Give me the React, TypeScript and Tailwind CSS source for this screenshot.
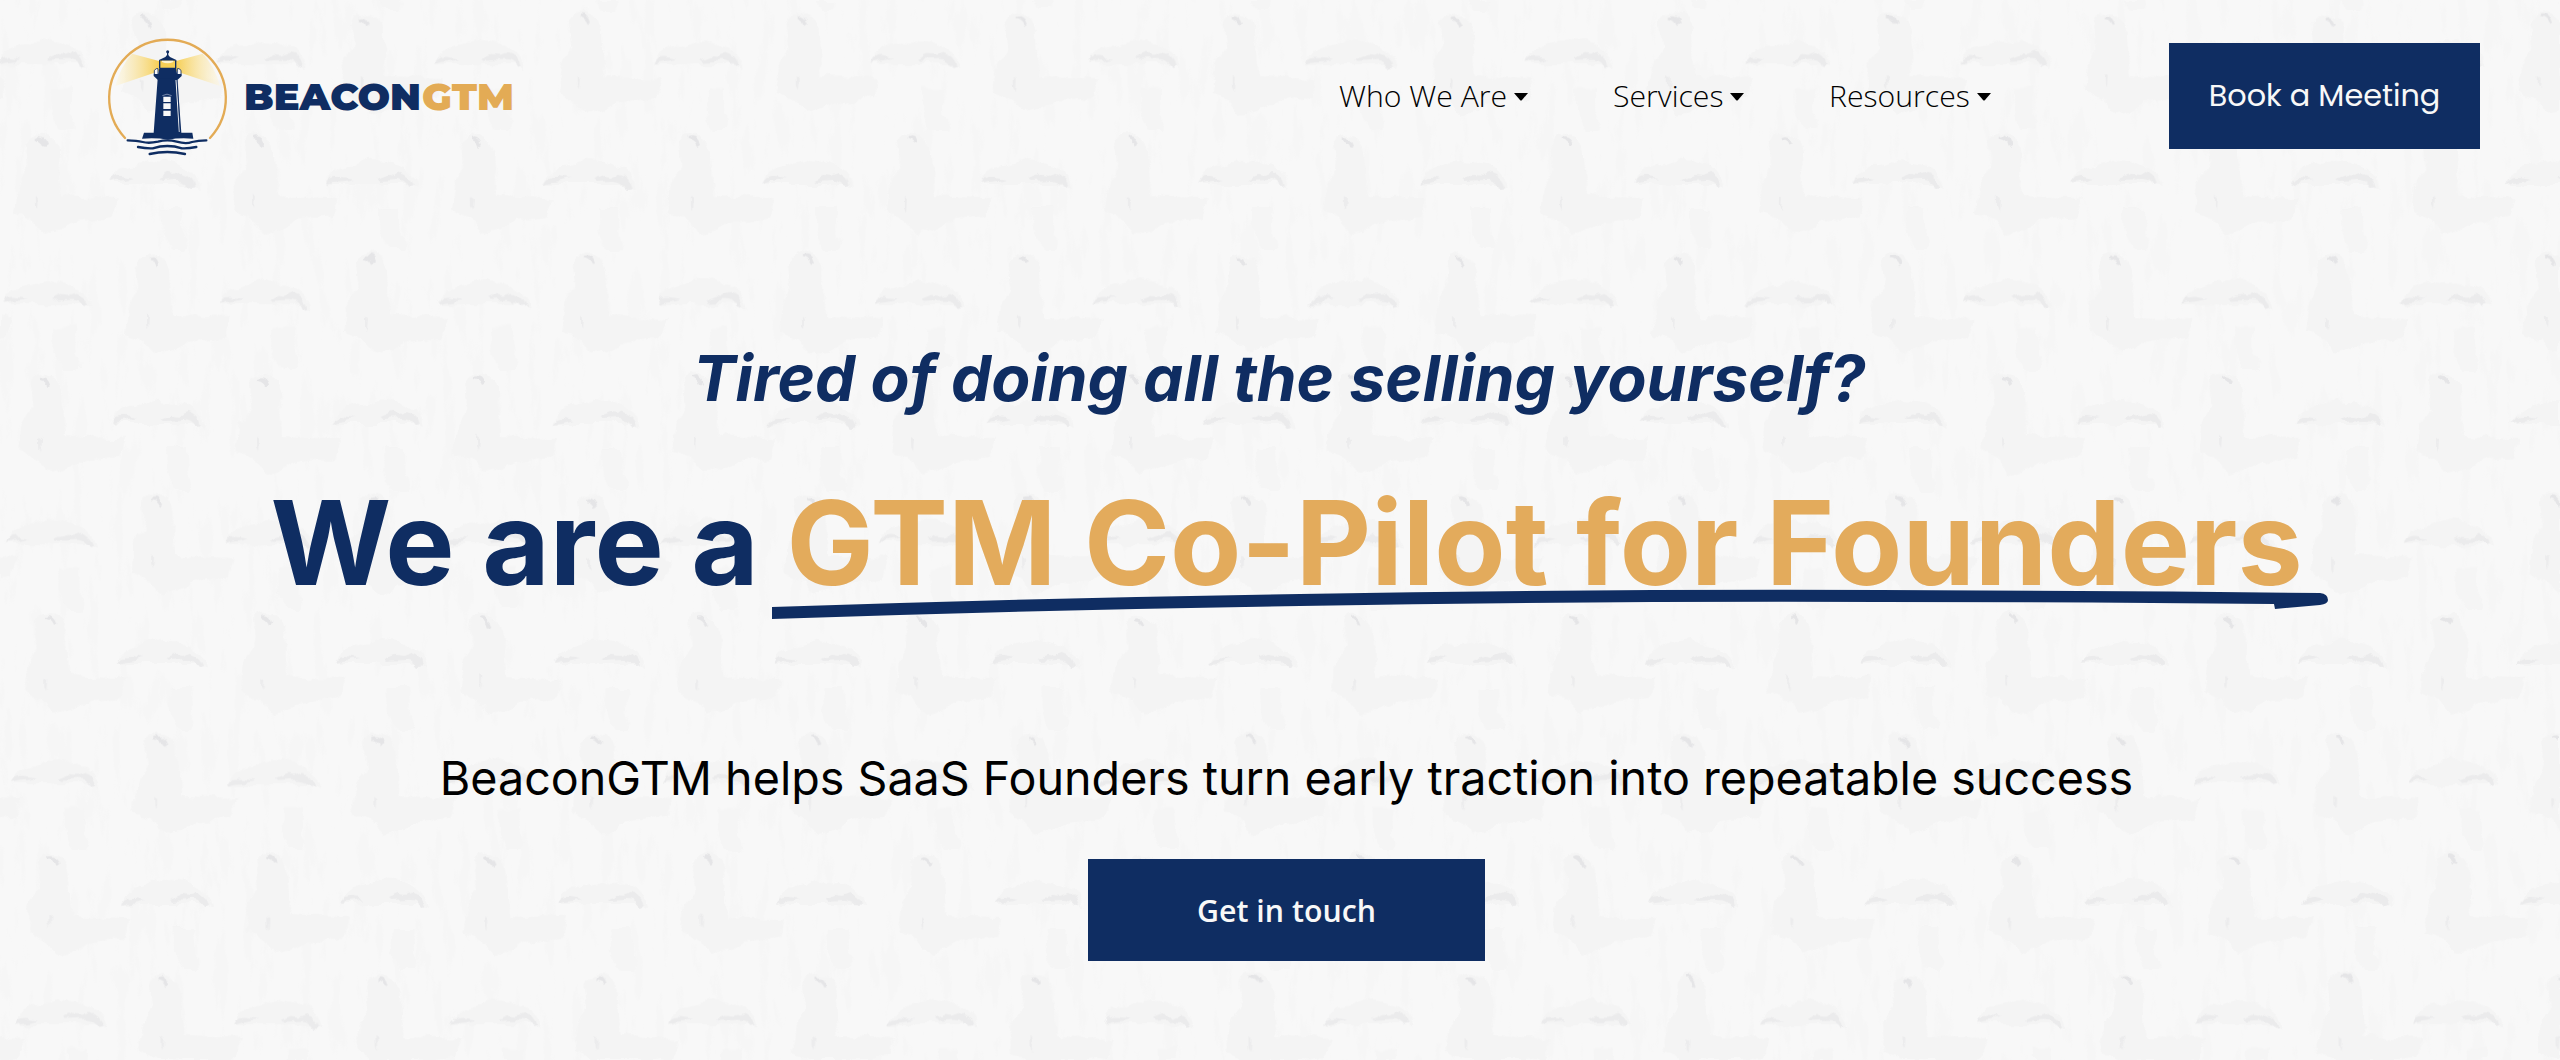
const NAVY = "#0f2d62";

const navItems = [
  { label: "Who We Are", width: "w-[189px]" },
  { label: "Services", width: "w-[131px]" },
  { label: "Resources", width: "w-[162px]" },
];

function WovenBackground() {
  return (
    <svg className="absolute inset-0 h-full w-full" aria-hidden="true">
      <defs>
        <filter id="rough" x="0" y="0" width="100%" height="100%">
          <feTurbulence type="fractalNoise" baseFrequency="0.05 0.03" numOctaves={4} seed={7} result="n" />
          <feDisplacementMap in="SourceGraphic" in2="n" scale={12} xChannelSelector="R" yChannelSelector="G" />
        </filter>
        {/* faint vertical fibres between the threads */}
        <filter id="fibres" x="0" y="0" width="100%" height="100%" colorInterpolationFilters="sRGB">
          <feTurbulence type="fractalNoise" baseFrequency="0.07 0.018" numOctaves={4} seed={3} />
          <feColorMatrix values="0 0 0 0 0.955  0 0 0 0 0.955  0 0 0 0 0.955  9 0 0 0 -5" />
        </filter>
        <g id="thread">
          <path d="M2 28 Q6 15 30 12 L44 8 Q60 8 72 14 Q88 20 90 36 L82 32 L2 32Z" fill="#f4f4f4" />
          <path d="M52 56 h20 v26 q8 8 2 16 h-14 q-6 -8 -8 -20z" fill="#f5f5f5" />
          <path d="M26 110 Q30 100 42 102 Q56 104 58 120 L60 164 L118 166 L112 186 L76 190 L60 198 L44 202 L32 188 L14 180 L18 150 L28 136Z" fill="#f4f4f4" />
          <path d="M0 32 q2 -8 12 -7 l12 2 -8 2 -10 1z M48 27 l10 -4 8 1 8 -3 q10 3 12 13 l-4 1 q-5 -8 -14 -7 l-18 1z" fill="#ebebec" />
          <path d="M36 105 q8 -3 11 7 l-3 2 q-2 -6 -8 -7z" fill="#e5e5e7" />
          <path d="M34 164 l3 2 -1 12 -2 -4z" fill="#ececed" />
        </g>
        <pattern id="weave" width="218" height="240" patternUnits="userSpaceOnUse" patternTransform="translate(109 152) skewX(1)">
          <use href="#thread" />
          <use href="#thread" x="-109" y="120" />
          <use href="#thread" x="109" y="120" />
          <use href="#thread" x="-109" y="-120" />
          <use href="#thread" x="109" y="-120" />
        </pattern>
      </defs>
      <rect width="100%" height="100%" filter="url(#fibres)" opacity="0.4" />
      <rect width="100%" height="100%" fill="url(#weave)" filter="url(#rough)" />
    </svg>
  );
}

function Lighthouse() {
  return (
    <svg className="h-[150px] w-[160px] shrink-0" viewBox="0 0 480 450">
      <defs>
        <linearGradient id="beamL" x1="1" x2="0" y1="0" y2="0">
          <stop offset="0" stopColor="#f6cf55" />
          <stop offset="1" stopColor="#fdf6e0" stopOpacity="0.5" />
        </linearGradient>
        <linearGradient id="beamR" x1="0" x2="1" y1="0" y2="0">
          <stop offset="0" stopColor="#f6cf55" />
          <stop offset="1" stopColor="#fdf6e0" stopOpacity="0.5" />
        </linearGradient>
      </defs>
      <path d="M207 123 L126 101 Q92 138 76 198 L207 154Z" fill="url(#beamL)" />
      <path d="M258 123 L338 101 Q374 138 390 198 L258 154Z" fill="url(#beamR)" />
      <path d="M105 354 A175 175 0 1 1 360 354" fill="none" stroke="#e3ab55" strokeWidth="7" strokeLinecap="round" />
      <g fill={NAVY}>
        <circle cx="233" cy="95" r="4.5" />
        <path d="M231 96h4v9l5 6 19 9v4h-52v-4l19-9 5-6z" />
        <path d="M209 122h48v24h-48z" fill="#f6cf55" />
        <path d="M216 126 q17 8 34 0 v-4 h-34z" fill="#fdf3cf" />
        <path d="M207 122h4v23h-4zM255 122h4v23h-4z" />
        <path d="M208 143h50l3 18h14v7l-12 11h-60l-12-11v-7h14z" />
        <path d="M203 176h59l12 162h33l3 18q-40-4-76 3-38-7-78-3l6-18h29z" />
      </g>
      <path d="M193 162v-11l6-5h5v16M273 162v-11l-6-5h-5v16" fill="#f8f8f8" stroke={NAVY} strokeWidth="2.5" />
      <path d="M258 180l10 156" stroke="#f8f8f8" strokeWidth="3" />
      <path d="M262 180l8 156" stroke={NAVY} strokeWidth="1.5" />
      <path d="M217 227q14-9 28 0" stroke="#8b9aba" strokeWidth="2.5" fill="none" />
      <path d="M220 230h22v16h-22zM220 250h22v17h-22zM220 272h22v16h-22z" fill="#f8f8f8" />
      <g fill="none" stroke={NAVY} strokeWidth="7" strokeLinecap="round">
        <path d="M113 361 Q140 361 158 366 T204 365 Q232 357 260 365 T306 366 Q324 361 349 361" />
        <path d="M144 381 Q170 386 188 385 Q210 378 232 378 Q254 378 276 385 Q294 386 319 381" />
        <path d="M179 402 Q232 390 285 402" />
      </g>
    </svg>
  );
}

function Logo() {
  return (
    <a href="#" className="flex items-center">
      <Lighthouse />
      <svg className="-ml-2 h-[60px] w-[280px]" viewBox="0 0 280 60">
        <text y="45" className="font-[Montserrat,Inter] text-[38px] font-black" fill={NAVY}>
          <tspan x="2" textLength="177" lengthAdjust="spacingAndGlyphs">BEACON</tspan>
        </text>
        <text y="45" className="font-[Montserrat,Inter] text-[38px] font-black" fill="#e3ab55">
          <tspan x="180" textLength="92" lengthAdjust="spacingAndGlyphs">GTM</tspan>
        </text>
      </svg>
    </a>
  );
}

function Header() {
  return (
    <header className="flex h-[190px] items-start">
      <div className="pt-5 pl-[90px]">
        <Logo />
      </div>
      <nav className="mt-[73px] ml-auto flex gap-[85px] font-['Open_Sans'] text-[30.2px] leading-[46px] font-light text-black">
        {navItems.map((item) => (
          <a key={item.label} href="#" className={`flex items-center justify-between whitespace-nowrap ${item.width}`}>
            {item.label}
            <svg className="mt-0.5 h-2 w-[14px]" viewBox="0 0 14 8" preserveAspectRatio="none">
              <path d="M0 0h14L8 7q-1 1-2 0z" />
            </svg>
          </a>
        ))}
      </nav>
      <a
        href="#"
        className="mt-[42.5px] mr-20 ml-[178px] flex h-[106px] w-[311px] items-center justify-center bg-[#0f2d62] font-[Poppins,'Open_Sans'] text-[30.3px] text-[#f8f8f8]"
      >
        Book a Meeting
      </a>
    </header>
  );
}

function Underline() {
  return (
    <svg className="absolute top-[116px] -left-[14px] h-8 w-[1560px]" viewBox="0 0 1560 32">
      <path
        d="M0 18 Q264 9 528 5 Q820 0 1108 1 L1400 2.5 L1548 4 Q1556 5 1556 11 Q1556 15 1548 16 L1503 20 L1502 15 Q1300 13 1108 13 Q820 12 528 17 Q264 21 0 30Z"
        fill={NAVY}
      />
    </svg>
  );
}

export default function App() {
  return (
    <div className="relative h-[1060px] w-[2560px] overflow-hidden bg-[#f8f8f8]">
      <WovenBackground />
      <div className="relative">
        <Header />
        <main className="flex flex-col items-center font-[Inter] text-[#0f2d62]">
          <p className="mt-[148px] mr-0.5 text-[63.9px] leading-[80px] font-bold italic">
            Tired of doing all the selling yourself?
          </p>
          <h1 className="mt-[55px] ml-[13px] text-[116.4px] leading-[140px] font-bold whitespace-nowrap">
            We are a{" "}
            <span className="relative inline-block text-[#e3ab5c]">
              GTM Co-Pilot for Founders
              <Underline />
            </span>
          </h1>
          <p className="mt-[133px] ml-[13px] text-[46.65px] leading-[64px] text-black">
            BeaconGTM helps SaaS Founders turn early traction into repeatable success
          </p>
          <a
            href="#"
            className="mt-[49px] ml-[13px] flex h-[102px] w-[397px] items-center justify-center bg-[#0f2d62] pt-0.5 font-['Open_Sans'] text-[30.3px] font-semibold text-[#f8f8f8]"
          >
            Get in touch
          </a>
        </main>
      </div>
    </div>
  );
}
